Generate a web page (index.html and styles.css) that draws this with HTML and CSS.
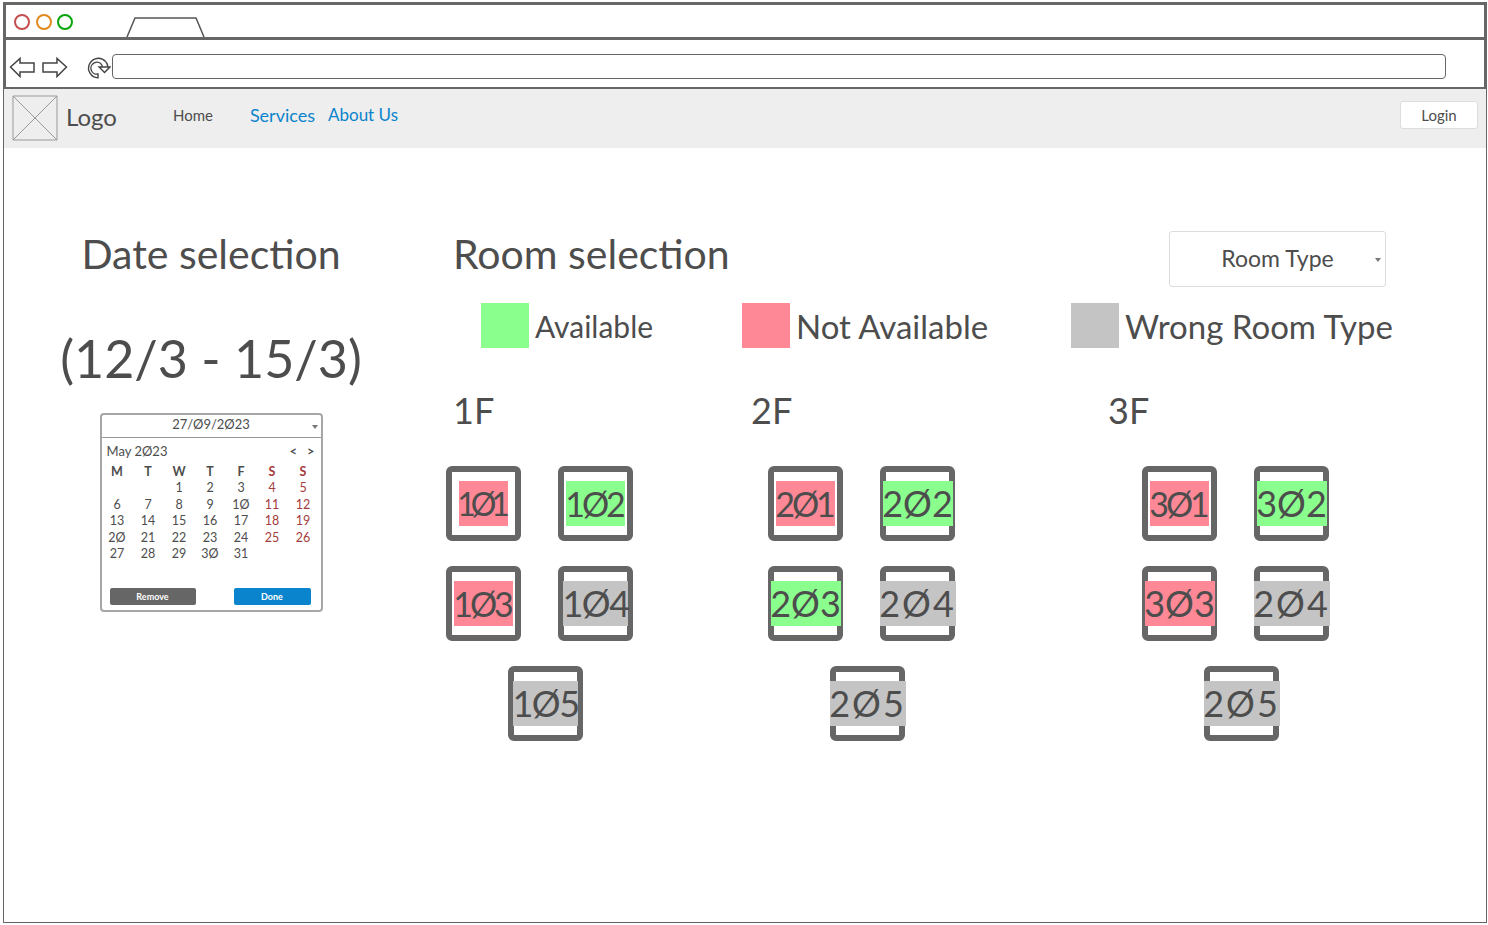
FILE: index.html
```html
<!DOCTYPE html>
<html lang="en">
<head>
  <meta charset="UTF-8">
  <title>Room booking wireframe</title>
  <link rel="stylesheet" href="styles.css">
</head>
<body>
  <div class="window">
    <div class="tabbar">
      <span class="dot dot-red"></span>
      <span class="dot dot-orange"></span>
      <span class="dot dot-green"></span>
      <svg class="tab" width="80" height="20" viewBox="0 0 80 20"><path d="M1 20 L9 1 H70 L78 20" fill="none" stroke="#555" stroke-width="1.5"/></svg>
    </div>
    <div class="addressbar">
      <svg width="26" height="22" viewBox="0 0 26 22"><path d="M1.500 11 L11 2.500 V7 H25 V16 H11 V20.500 Z" fill="none" stroke="#444" stroke-width="1.5"/></svg>
      <svg class="forward" width="26" height="22" viewBox="0 0 26 22"><path d="M24.500 11 L15 2.500 V7 H1 V16 H15 V20.500 Z" fill="none" stroke="#444" stroke-width="1.500"/></svg>
      <svg class="reload" width="26" height="26" viewBox="0 0 24 24">
        <path d="M19 7 A9 9 0 1 0 12 22 L12 18.500 A5.500 5.500 0 1 1 15.500 10" fill="none" stroke="#444" stroke-width="1.300"/>
        <path d="M13 12 H23 L18 17 Z" fill="#fff" stroke="#444" stroke-width="1.300"/>
        <path d="M19 7 Q21 9 21 12 M15.500 10 L16 12" fill="none" stroke="#444" stroke-width="1.300"/>
      </svg>
      <div class="url"></div>
    </div>

    <nav class="nav">
      <svg class="logo-box" width="46" height="46" viewBox="0 0 46 46"><path d="M1 1 H45 V45 H1 Z M1 1 L45 45 M45 1 L1 45" fill="#eee" stroke="#999" stroke-width="1"/></svg>
      <span class="logo-text">Logo</span>
      <a class="nav-link nav-home">Home</a>
      <a class="nav-link nav-services">Services</a>
      <a class="nav-link nav-about">About Us</a>
      <button class="login">Login</button>
    </nav>

    <main class="main">
      <section class="date-col">
        <h2 class="title">Date selection</h2>
        <div class="range">(12/3 - 15/3)</div>
        <div class="calendar">
          <div class="cal-input">27/Ø9/2Ø23<span class="caret"></span></div>
          <div class="cal-month"><span>May 2Ø23</span><span class="cal-arrows"><b>&lt;</b><b>&gt;</b></span></div>
          <div class="cal-grid">
            <b>M</b><b>T</b><b>W</b><b>T</b><b>F</b><b class="we">S</b><b class="we">S</b>
            <i></i><i></i><i>1</i><i>2</i><i>3</i><i class="we">4</i><i class="we">5</i>
            <i>6</i><i>7</i><i>8</i><i>9</i><i>1Ø</i><i class="we">11</i><i class="we">12</i>
            <i>13</i><i>14</i><i>15</i><i>16</i><i>17</i><i class="we">18</i><i class="we">19</i>
            <i>2Ø</i><i>21</i><i>22</i><i>23</i><i>24</i><i class="we">25</i><i class="we">26</i>
            <i>27</i><i>28</i><i>29</i><i>3Ø</i><i>31</i><i></i><i></i>
          </div>
          <div class="cal-actions">
            <button class="cal-btn cal-remove">Remove</button>
            <button class="cal-btn cal-done">Done</button>
          </div>
        </div>
      </section>

      <section class="room-col">
        <div class="room-head">
          <h2 class="title">Room selection</h2>
          <div class="select">Room Type<span class="caret"></span></div>
        </div>

        <div class="legend">
          <div class="legend-item legend-short"><span class="swatch green"></span>Available</div>
          <div class="legend-item"><span class="swatch red"></span>Not Available</div>
          <div class="legend-item"><span class="swatch grey"></span>Wrong Room Type</div>
        </div>

        <div class="floors">
          <div class="floor floor-1">
            <div class="floor-label">1F</div>
            <div class="rooms">
              <div class="room"><span class="red fit-49">1Ø1</span></div>
              <div class="room"><span class="green fit-59">1Ø2</span></div>
              <div class="room"><span class="red fit-59">1Ø3</span></div>
              <div class="room"><span class="grey fit-65">1Ø4</span></div>
              <div class="room room-last"><span class="grey fit-65">1Ø5</span></div>
            </div>
          </div>
          <div class="floor floor-2">
            <div class="floor-label">2F</div>
            <div class="rooms">
              <div class="room"><span class="red fit-59">2Ø1</span></div>
              <div class="room"><span class="green fit-70">2Ø2</span></div>
              <div class="room"><span class="green fit-70">2Ø3</span></div>
              <div class="room"><span class="grey fit-76">2Ø4</span></div>
              <div class="room room-last"><span class="grey fit-76">2Ø5</span></div>
            </div>
          </div>
          <div class="floor floor-3">
            <div class="floor-label">3F</div>
            <div class="rooms">
              <div class="room"><span class="red fit-59">3Ø1</span></div>
              <div class="room"><span class="green fit-70">3Ø2</span></div>
              <div class="room"><span class="red fit-70">3Ø3</span></div>
              <div class="room"><span class="grey fit-76">2Ø4</span></div>
              <div class="room room-last"><span class="grey fit-76">2Ø5</span></div>
            </div>
          </div>
        </div>
      </section>
    </main>
  </div>
</body>
</html>
```

FILE: styles.css
```css
* {
  box-sizing: border-box;
}
body {
  margin: 0;
  background: #fff;
  font-family: Lato, "Open Sans", sans-serif;
  color: #4d4d4d;
  overflow: hidden;
}
.window {
  width: 1484px;
  height: 921px;
  margin: 2px 0 0 3px;
  border: 1px solid #666;
  border-top: 0;
}

/* browser chrome */
.tabbar {
  display: flex;
  align-items: center;
  gap: 5.500px;
  height: 35px;
  margin: 0 -1px;
  padding: 1px 0 0 8px;
  border: 3px solid #666;
  border-bottom: 0;
}
.dot {
  width: 16px;
  height: 16px;
  border: 2px solid #999;
  border-radius: 50%;
}
.dot-red { border-color: #c44f4f; }
.dot-orange { border-color: #e08a1e; }
.dot-green { border-color: #0aa50a; }
.tab {
  align-self: flex-end;
  margin-left: 47px;
}
.addressbar {
  display: flex;
  align-items: center;
  height: 52px;
  margin: 0 -1px;
  padding: 6px 0 0 3px;
  border: 3px solid #666;
  border-bottom-width: 2px;
}
.forward { margin-left: 7px; }
.reload { margin-left: 17px; margin-right: 1px; }
.url {
  width: 1334px;
  height: 25px;
  border: 1.500px solid #666;
  border-radius: 4px;
}

/* nav */
.nav {
  display: flex;
  align-items: center;
  height: 59px;
  padding: 0 8px;
  background: #eee;
}
.logo-box { margin-bottom: 2px; }
.logo-text {
  margin: 0 0 4px 8px;
  font-size: 24px;
}
.nav-link {
  margin-bottom: 8px;
  font-size: 18px;
  color: #0a84cc;
}
.nav-home { margin-left: 56px; font-size: 15px; color: #4d4d4d; }
.nav-services { margin-left: 37px; }
.nav-about { margin-left: 13px; font-size: 17px; }
.login {
  width: 78px;
  height: 28px;
  margin: 0 0 8px auto;
  background: #fff;
  border: 1px solid #ddd;
  border-radius: 3px;
  font: 15px Lato, sans-serif;
  color: #4d4d4d;
}

/* layout */
.main {
  display: flex;
  align-items: flex-start;
  padding-top: 77px;
}
.date-col {
  display: flex;
  flex-direction: column;
  align-items: center;
  width: 302px;
  margin-left: 56px;
}
.room-col {
  width: 960px;
  margin-left: 84px;
}
.title {
  margin: 0;
  font-size: 41px;
  font-weight: 400;
  line-height: 58px;
}
.range {
  margin-top: 39px;
  font-size: 52px;
  line-height: 72px;
  white-space: nowrap;
}

/* calendar */
.calendar {
  width: 223px;
  height: 199px;
  margin-top: 19px;
  border: 2px solid #a6a6a6;
  border-radius: 4px;
  font-size: 13px;
}
.cal-input {
  position: relative;
  height: 23px;
  line-height: 19px;
  text-align: center;
  border-bottom: 1px solid #999;
}
.caret {
  position: absolute;
  right: 3px;
  top: 10px;
  border: 3px solid transparent;
  border-top: 4px solid #777;
  border-bottom: 0;
}
.cal-month {
  display: flex;
  justify-content: space-between;
  margin-top: 5px;
  padding: 0 6px 0 5px;
  line-height: 16px;
}
.cal-arrows {
  display: flex;
  gap: 10px;
}
.cal-grid {
  display: grid;
  grid-template-columns: repeat(7, 31px);
  grid-auto-rows: 16.400px;
  margin-top: 5px;
  text-align: center;
  font-size: 12.500px;
}
.cal-grid i {
  font-style: normal;
}
.we { color: #a33c3c; }
.cal-actions {
  display: flex;
  justify-content: space-between;
  margin-top: 26px;
  padding: 0 10px 0 8px;
}
.cal-btn {
  height: 17px;
  padding: 0;
  border: 0;
  border-radius: 2px;
  color: #fff;
  font: 700 9px Lato, sans-serif;
}
.cal-remove { width: 86px; background: #666; }
.cal-done { width: 77px; background: #0a84cc; }

/* room selection */
.room-head {
  display: flex;
  align-items: flex-start;
  justify-content: space-between;
  padding: 0 20px 0 7px;
}
.select {
  position: relative;
  width: 217px;
  height: 56px;
  margin-top: 6px;
  line-height: 52px;
  text-align: center;
  border: 1px solid #ddd;
  border-radius: 3px;
  font-size: 23px;
}
.select .caret {
  top: 26px;
  right: 4px;
}
.legend {
  display: grid;
  grid-template-columns: 261px 329px auto;
  margin-top: 16px;
  padding-left: 35px;
}
.legend-item {
  display: flex;
  align-items: center;
  gap: 6px;
  height: 45px;
  font-size: 33px;
  white-space: nowrap;
}
.legend-short { font-size: 30px; }
.swatch {
  flex: none;
  width: 48px;
  height: 45px;
}
.green { background: #8aff8e; }
.red { background: #ff8896; }
.grey { background: #c4c4c4; }

/* floors */
.floors {
  display: flex;
  margin-top: 37px;
}
.floor { width: 187px; }
.floor-2 { margin-left: 135px; }
.floor-3 { margin-left: 187px; }
.floor-label {
  height: 81px;
  font-size: 36px;
  line-height: 50px;
}
.floor-1 .floor-label { margin-left: 7px; }
.floor-2 .floor-label { margin-left: -17px; }
.floor-3 .floor-label { margin-left: -34px; }
.rooms {
  display: grid;
  grid-template-columns: 75px 75px;
  grid-auto-rows: 75px;
  gap: 25px 37px;
}
.room {
  display: flex;
  align-items: center;
  justify-content: center;
  border: 6px solid #666;
  border-radius: 6px;
}
.room span {
  flex: none;
  display: flex;
  justify-content: center;
  height: 45px;
  font-size: 36px;
  line-height: 45px;
}
.room .fit-49 { width: 49px; font-size: 32px; letter-spacing: -5px; padding-right: 5px; }
.room .fit-59 { width: 59px; font-size: 34px; letter-spacing: -3px; padding-right: 3px; }
.room .fit-65 { width: 65px; letter-spacing: -1.500px; }
.room .fit-70 { width: 70px; }
.room .fit-76 { width: 76px; letter-spacing: 2px; }
.room-last {
  grid-column: 1 / -1;
  justify-self: center;
  width: 75px;
  margin-left: 12px;
}
```
